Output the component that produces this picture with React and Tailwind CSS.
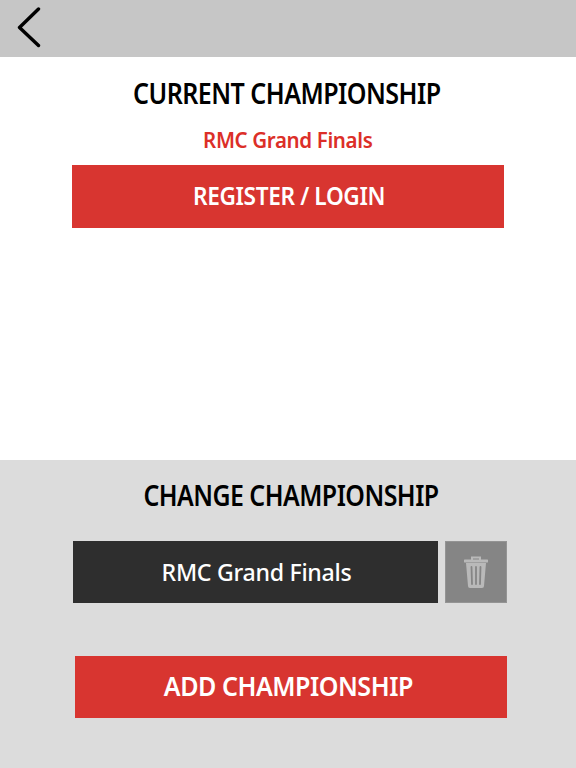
export default function App() {
  return (
    <div className="w-[576px] h-[768px] flex flex-col font-['Noto_Sans',sans-serif] overflow-hidden">
      <header className="h-[57px] bg-[#c6c6c6] flex items-start pl-[17px] pt-[7px] shrink-0">
        <svg width="25" height="42" viewBox="0 0 25 42" fill="none" stroke="#000" strokeWidth="3.4" strokeLinecap="round" strokeLinejoin="round">
          <path d="M21.5 2 L2.5 20.5 L21.5 38.5" />
        </svg>
      </header>
      <main className="h-[403px] bg-white flex flex-col items-center pt-[19px] shrink-0">
        <h1 className="text-[28px] leading-[34px] font-semibold text-black tracking-[-0.6px] whitespace-nowrap -translate-x-px scale-x-[0.895]">CURRENT CHAMPIONSHIP</h1>
        <p className="mt-[15px] text-[22px] leading-[28px] font-semibold text-[#dc2f28] tracking-[-0.4px] whitespace-nowrap scale-x-[0.933]">RMC Grand Finals</p>
        <button className="mt-[12px] w-[432px] h-[63px] bg-[#d83530] text-white text-[25px] font-semibold flex items-center justify-center self-start ml-[72px]">
          <span className="tracking-[-0.4px] scale-x-[0.905] translate-x-px -translate-y-px whitespace-nowrap">REGISTER / LOGIN</span>
        </button>
      </main>
      <section className="flex-1 bg-[#dcdcdc] flex flex-col pt-[18px]">
        <h2 className="text-[28px] leading-[34px] font-semibold text-black tracking-[-0.6px] text-center whitespace-nowrap translate-x-[3px] scale-x-[0.89]">CHANGE CHAMPIONSHIP</h2>
        <div className="mt-[29px] ml-[73px] flex gap-[7px]">
          <div className="w-[365px] h-[62px] bg-[#2e2e2e] text-white text-[24px] font-medium flex items-center justify-center">
            <span className="tracking-[-0.3px] scale-x-[0.964] translate-x-px whitespace-nowrap">RMC Grand Finals</span>
          </div>
          <button className="w-[62px] h-[62px] bg-[#858585] border border-[#949494] flex items-center justify-center">
            <svg width="24" height="32" viewBox="0 0 24 32" fill="none">
              <path d="M8 4 V1.5 H16 V4" stroke="#b9b9b9" strokeWidth="2" />
              <path d="M1 5 H23" stroke="#b9b9b9" strokeWidth="3" strokeLinecap="round" />
              <path d="M2 7 H22 L20 30 Q20 32 18 32 H6 Q4 32 4 30 Z" fill="#b9b9b9" />
              <path d="M7.5 11 L8 28 M12 11 V28 M16.5 11 L16 28" stroke="#858585" strokeWidth="1.8" strokeLinecap="round" />
            </svg>
          </button>
        </div>
        <button className="mt-[53px] ml-[75px] w-[432px] h-[62px] bg-[#d83530] text-white text-[27px] font-semibold flex items-center justify-center">
          <span className="tracking-[-0.5px] scale-x-[0.927] -translate-x-[3px] -translate-y-px whitespace-nowrap">ADD CHAMPIONSHIP</span>
        </button>
      </section>
    </div>
  );
}
